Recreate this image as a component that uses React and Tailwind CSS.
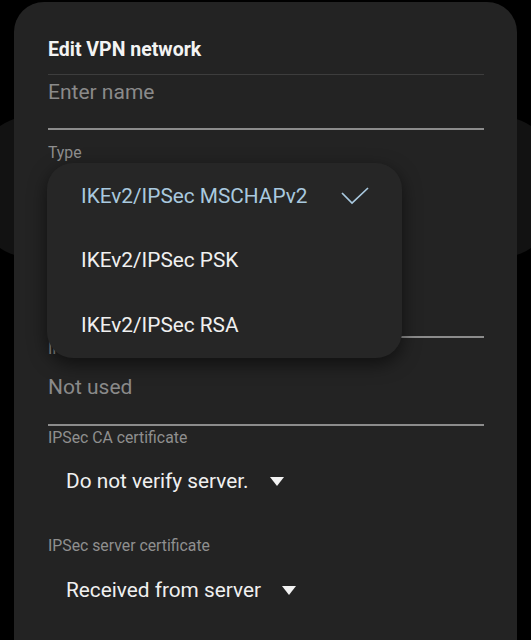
import React from 'react';

const options = [
  { label: 'IKEv2/IPSec MSCHAPv2', selected: true },
  { label: 'IKEv2/IPSec PSK' },
  { label: 'IKEv2/IPSec RSA' },
];

function Caret() {
  return (
    <svg width="14" height="10" viewBox="0 0 14 10" className="ml-[21px] shrink-0">
      <path d="M0 0 H14 L7 9 Z" fill="#f2f2f2" />
    </svg>
  );
}

function Label({ children, className = '' }) {
  return <div className={`text-[15.8px] leading-[18px] text-[#8f8f8f] ${className}`}>{children}</div>;
}

export default function App() {
  return (
    <div
      className="relative h-[640px] w-[531px] overflow-hidden bg-black"
      style={{ fontFamily: 'Roboto, "Noto Sans", sans-serif' }}
    >
      {/* dimmed sheet behind the dialog */}
      <div className="absolute left-[-20px] right-[-20px] top-[117px] h-[140px] rounded-[48px] bg-[#121212]" />

      <div className="relative mx-[14px] mt-[2px] h-[660px] rounded-t-[30px] bg-[#232323] pl-[34px] pr-[33px]">
        <div className="pt-[36px] text-[19.5px] font-bold leading-[24px] text-[#f3f3f3]">Edit VPN network</div>
        <div className="mt-[12px] h-px bg-[#3d3d3d]" />

        <div className="mt-[5px] text-[21px] leading-[24px] text-[#8a8a8a]">Enter name</div>
        <div className="mt-[24px] h-[2px] bg-[#8c8c8c]" />

        <Label className="mt-[14px]">Type</Label>
        {/* type value + server address field sit under the open menu */}
        <div className="h-[174px]" />
        <div className="h-[2px] bg-[#8c8c8c]" />

        <Label className="mt-[2px]">IPSec identifier</Label>
        <div className="mt-[17px] text-[21px] leading-[24px] text-[#8a8a8a]">Not used</div>
        <div className="mt-[25px] h-[2px] bg-[#8c8c8c]" />

        <Label className="mt-[3px]">IPSec CA certificate</Label>
        <div className="mt-[21px] flex h-[28px] items-center pl-[18px] text-[20.8px] text-[#f0f0f0]">
          Do not verify server.
          <Caret />
        </div>

        <Label className="mt-[41px]">IPSec server certificate</Label>
        <div className="mt-[22px] flex h-[28px] items-center pl-[18px] text-[20.8px] text-[#f0f0f0]">
          Received from server
          <Caret />
        </div>
      </div>

      {/* open Type menu */}
      <div className="absolute left-[47px] top-[163px] w-[355px] rounded-[26px] bg-[#262626] pt-px shadow-[0_6px_18px_rgba(0,0,0,0.55)]">
        {options.map((o) => (
          <div
            key={o.label}
            className={`flex h-[64.5px] items-center pl-[34px] text-[20.8px] ${o.selected ? 'text-[#a9c9df]' : 'text-[#f0f0f0]'}`}
          >
            <span>{o.label}</span>
            {o.selected && (
              <svg width="28" height="20" viewBox="0 0 28 20" className="ml-auto mr-[33px]">
                <polyline points="1,7 11,17 27,2" fill="none" stroke="#a9c9df" strokeWidth="1.7" />
              </svg>
            )}
          </div>
        ))}
      </div>
    </div>
  );
}
